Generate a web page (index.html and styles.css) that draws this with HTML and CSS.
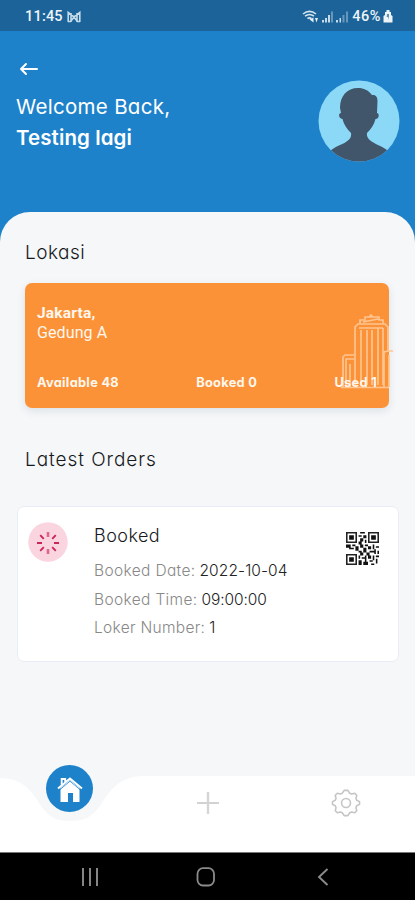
FILE: index.html
```html
<!DOCTYPE html>
<html lang="id">
<head>
<meta charset="utf-8">
<meta name="viewport" content="width=device-width, initial-scale=1">
<title>Loker</title>
<link rel="stylesheet" href="styles.css">
</head>
<body>
<div class="status">
  <div class="status-left"><span class="clock">11:45</span>
    <svg width="14" height="12" viewBox="0 0 14 12" fill="none" stroke="#c3dbea" stroke-width="1.6"><path d="M1.200 11V1.500L7 6l5.800-4.500V11M4 11V2M10 11V2M1 10.500h3M10 10.500h3M4 10l3-4 3 4"/></svg>
  </div>
  <div class="status-right">
    <svg width="47" height="14" viewBox="0 0 47 14"><g fill="none" stroke="#d5e5ef" stroke-width="1.600"><path d="M0 4Q6.500-1.300 13 4M2 6.200Q6.500 2.700 11 6.200M4.500 8.700Q6.500 7 8.500 8.700"/></g><path d="M6.500 9.500l4-2v5zM12 8h3l-1.500 4.500z" fill="#e2edf4"/><g fill="#c6dae7"><path d="M19 10h2v2.500h-2zM22 8h2v4.500h-2zM25 5h2v7.500h-2zM33 10h2v2.500h-2zM36.500 8H38v4.500h-1.500z"/><path opacity=".45" d="M28 1.500h2v11h-2zM39.500 5h2v7.500h-2zM43 1.500h2v11h-2z"/></g></svg>
    <span class="pct">46%</span>
    <svg width="10" height="13" viewBox="0 0 10 13"><path fill="#edf4f8" d="M3.500 0h3v2H8v3l1.500 1v6.500H.5V6L2 5V2h1.500z"/><path d="M4 4h2v2.500L5 10V7H3.600z" fill="#608eae"/></svg>
  </div>
</div>
<header class="header">
  <div>
    <svg class="back" width="20" height="14" viewBox="0 0 20 14" fill="none" stroke="#fff" stroke-width="2" stroke-linecap="round" stroke-linejoin="round"><path d="M18 7H2M7 2L2 7l5 5"/></svg>
    <p class="welcome">Welcome Back,</p>
    <p class="name">Testing lagi</p>
  </div>
  <svg class="avatar" width="82" height="82" viewBox="0 0 82 82"><defs><clipPath id="c"><circle cx="41" cy="41" r="40.500"/></clipPath></defs><circle cx="41" cy="41" r="40.500" fill="#8cd9f7"/><path clip-path="url(#c)" fill="#42566b" d="M22 28C22 16 29 8 40 8c6 0 10 2 14 7 4-.5 5.500 2 5.500 6L59 33c2.500 0 2.500 6-1.500 6-1.500 6-4.500 10-8.500 14-1 6 5 9 11 12 5 2 10 5 15 10v10H8V75c4-5 9-8 14-10 7-3 12-6 11-12-4-4-7-8-8.500-14-4 0-4.500-6-1.500-6z"/></svg>
</header>
<main class="panel">
  <h2 class="title lokasi">Lokasi</h2>
  <section class="location">
    <svg class="building" width="50" height="76" viewBox="0 0 50 76" fill="none" stroke="#ffc590" stroke-width="1.700"><path d="M0 73.500h48M2 73V43l2-2h9M5 73V45h8M9 50v23M14 73V13l3-3h27l3 3v25M20 16v55M26 16v55M31 16v55M37 14v57M42 14v57M18 14h24M19 10V6h5V3h14v3h4v4M22 8l15-3M28 3l2-2 2 2M43 73V38l4-1h5M48 41v32"/></svg>
    <p class="city">Jakarta,</p>
    <p class="place">Gedung A</p>
    <div class="counts"><span>Available 48</span><span>Booked 0</span><span>Used 1</span></div>
  </section>
  <h2 class="title latest">Latest Orders</h2>
  <section class="order">
    <svg class="state" width="40" height="40" viewBox="-20 -20 40 40"><circle r="19.700" fill="#fad4df"/><g stroke="#cb2458" stroke-width="1.900"><path d="M6 1h5M-6 1h-5M4.200 5.200l3.600 3.600M-4.200-3.200l-3.600-3.600M4.200-3.200l3.600-3.600M-4.200 5.200l-3.600 3.600"/><path stroke="#dd688c" stroke-width="2.600" d="M0 7v5M0-5v-5"/></g></svg>
    <div class="info">
      <h3>Booked</h3>
      <p><span class="label">Booked Date:</span><b>2022-10-04</b></p>
      <p><span class="label">Booked Time:</span><b class="time">09:00:00</b></p>
      <p><span class="label number">Loker Number:</span><b>1</b></p>
    </div>
    <svg class="qr" width="33" height="33" viewBox="0 0 21 21"><g fill="none" stroke="#222"><path d="M.5.500h6v6h-6zM14.500.500h6v6h-6zM.5 14.500h6v6h-6z"/></g><path fill="#111" d="M2 2h3v3H2zM16 2h3v3h-3zM2 16h3v3H2zM9 0h3v1H9zM8 2h2v1H8zM11 2h2v2h-2zM9 4h2v2H9zM12 5h1v2h-1zM8 6h2v2H8zM0 8h3v2H0zM4 8h2v1H4zM2 10h3v1H2zM6 9h2v3H6zM9 8h2v2H9zM12 8h2v1h-2zM11 10h2v3h-2zM8 12h2v1H8zM14 9h2v2h-2zM17 8h1v3h-1zM19 9h2v1h-2zM15 12h3v1h-3zM18 11h1v3h-1zM20 12h1v2h-1zM9 13h2v2H9zM13 13h2v2h-2zM8 15h1v2H8zM10 16h3v1h-3zM12 15h1v4h-1zM14 15h2v2h-2zM17 15h1v3h-1zM19 15h2v1h-2zM8 18h2v3H8zM11 19h3v2h-3zM15 18h2v1h-2zM16 20h2v1h-2zM19 17h1v3h-1z"/></svg>
  </section>
  <nav class="tabs">
    <svg class="shelf" viewBox="0 0 415 88" width="415" height="88"><path fill="#fff" d="M0 14C25 14 34 31 41 42c8 11 15 15 29 15s22-4 30-15c8-12 17-30 44-30h271v76H0z"/></svg>
    <div class="tab home"><svg width="26" height="27" viewBox="0 0 26 27"><path fill="#fff" d="M3.500 13L13 5l9.500 8v14H16v-9h-5v9H3.500z"/><path d="M1 13.500L13 3.500l12 10M4.700 10V4h3.500v3" fill="none" stroke="#fff" stroke-width="1.900"/><path d="M2.500 15L13 6.200 23.500 15" fill="none" stroke="#1e82ca" stroke-width=".8"/></svg></div>
    <div class="tab plus"><svg width="24" height="24" viewBox="0 0 24 24"><path d="M1 12h22" stroke="#c7c7c7" stroke-width="1.600"/><path d="M12 1v22" stroke="#d5d5d5" stroke-width="2.400"/></svg></div>
    <div class="tab gear"><svg width="28" height="28" viewBox="-15 -15 30 30" fill="none" stroke="#c5c5c5" stroke-width="1.700" stroke-linejoin="round"><circle r="4.800"/><path d="M-2-13.500h4l2 3 2 .8 3.300-.8 2.200 2.200-.8 3.300.8 2 3 1.500v3l-3 1.500-.8 2 .8 3.300-2.200 2.200-3.300-.8-2 .8-2 3h-4l-2-3-2-.8-3.300.8-2.200-2.200.8-3.300-.8-2-3-1.500v-3l3-1.500.8-2-.8-3.300 2.200-2.200 3.300.8 2-.8z"/></svg></div>
  </nav>
</main>
<footer class="system">
  <svg width="18" height="18" viewBox="0 0 18 18"><path d="M2 0v18M9 0v18M16 0v18" stroke="#8b8b8b" stroke-width="1.900"/></svg>
  <svg width="20" height="20" viewBox="0 0 20 20"><rect x="1.500" y="1.200" width="16.500" height="17.300" rx="5.500" fill="none" stroke="#8b8b8b" stroke-width="1.800"/></svg>
  <svg width="12" height="18" viewBox="0 0 12 18"><path d="M10.500 1L2 9l8.500 8" fill="none" stroke="#8b8b8b" stroke-width="1.900"/></svg>
</footer>
</body>
</html>
```
FILE: styles.css
```css
* { box-sizing: border-box; margin: 0; padding: 0; }
body { width: 415px; height: 900px; overflow: hidden; display: flex; flex-direction: column; background: #1e82ca; font-family: Inter, "Noto Sans", sans-serif; font-feature-settings: "cv11" 1; }
svg { display: block; flex: none; overflow: visible; }
.status { height: 31px; flex: none; background: #1b6398; display: flex; justify-content: space-between; align-items: center; padding: 2px 22px 0 25px; color: #eef5f9; font: 500 14.5px Roboto, sans-serif; }
.status-left, .status-right { display: flex; align-items: center; }
.status-left { gap: 4px; }
.status-right { gap: 2px; }
.clock { letter-spacing: .2px; }
.pct { letter-spacing: .5px; }
.header { height: 181px; flex: none; display: flex; justify-content: space-between; padding: 31px 15px 0 16px; color: #fff; }
.back { margin: 0 0 15px 3px; }
.welcome { font-size: 20.5px; line-height: 31px; letter-spacing: .3px; }
.name { font-size: 20.5px; line-height: 31px; font-weight: 600; letter-spacing: .1px; }
.avatar { margin-top: 18px; }
.panel { height: 640px; flex: none; background: #f5f7f9; border-radius: 30px 30px 0 0; display: flex; flex-direction: column; }
.title { font-size: 19px; font-weight: 300; line-height: 26px; color: #17191c; margin-left: 25px; letter-spacing: .5px; }
.lokasi { margin-top: 28px; }
.location { position: relative; height: 125px; margin: 17px 26px 0 25px; padding: 20px 12px 0; border-radius: 7px; background: #fc9238; color: #fff7ed; box-shadow: 0 3px 8px rgba(60, 70, 90, .12); }
.building { position: absolute; right: -2px; top: 31px; }
.city, .place { font: 16px/20px Roboto, sans-serif; }
.city { font-weight: 700; font-size: 15.500px; letter-spacing: .2px; }
.place { letter-spacing: .1px; }
.counts { position: relative; display: flex; justify-content: space-between; margin-top: 30px; font-size: 12.8px; line-height: 20px; font-weight: 700; letter-spacing: .3px; }
.latest { margin-top: 39px; letter-spacing: .95px; }
.order { height: 156px; margin: 33px 16px 0 17px; padding: 15px 19px 0 10px; display: flex; align-items: flex-start; background: #fff; border: 1px solid #eaedf5; border-radius: 7px; }
.info { margin-left: 26px; flex: 1; }
.info h3 { font-size: 18px; font-weight: 300; line-height: 27px; color: #17191c; letter-spacing: .45px; }
.info p { display: flex; gap: 4px; font-size: 15.500px; line-height: 28.5px; color: #888; font-weight: 300; white-space: nowrap; }
.info h3 + p { margin-top: 8px; }
.label { letter-spacing: .35px; }
.number { letter-spacing: .3px; }
.info b { font-weight: 300; color: #222; letter-spacing: .1px; }
.info .time { letter-spacing: -.1px; }
.qr { margin-top: 10px; }
.tabs { position: relative; height: 88px; margin-top: auto; display: flex; padding: 0 0 0 46px; }
.shelf { position: absolute; left: 0; bottom: 0; }
.tab { position: relative; }
.home { width: 47px; height: 47px; border-radius: 50%; background: #1e82ca; display: flex; align-items: center; justify-content: center; margin-top: 1px; }
.plus { margin: 27px 0 0 103px; }
.gear { margin: 25px 0 0 112px; }
.system { height: 48px; flex: none; background: #000; border-top: 1px solid #777; display: flex; align-items: center; padding-left: 81px; }
.system svg:nth-child(2) { margin-left: 97px; }
.system svg:nth-child(3) { margin-left: 101px; }
```
